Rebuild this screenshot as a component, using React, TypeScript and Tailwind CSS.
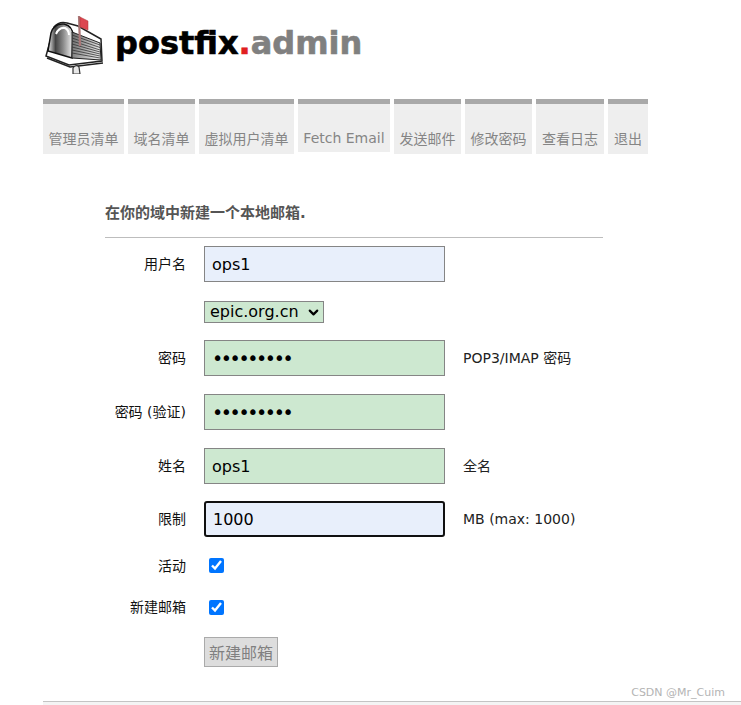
import { ChevronDown } from "lucide-react";

const TABS = [
  { label: "管理员清单", width: "w-[81px]" },
  { label: "域名清单", width: "w-[67px]" },
  { label: "虚拟用户清单", width: "w-[95px]" },
  { label: "Fetch Email", width: "w-[92px]", short: true },
  { label: "发送邮件", width: "w-[67px]" },
  { label: "修改密码", width: "w-[67px]" },
  { label: "查看日志", width: "w-[68px]" },
  { label: "退出", width: "w-[40px]" },
];

const Logo = () => (
  <svg width="60" height="62" viewBox="0 0 60 62" className="shrink-0">
    <defs>
      <linearGradient id="door" x1="0" y1="0" x2="1" y2="0">
        <stop offset="0" stopColor="#f0f0f0" />
        <stop offset="0.3" stopColor="#444" />
        <stop offset="0.6" stopColor="#888" />
        <stop offset="1" stopColor="#f2f2f2" />
      </linearGradient>
      <linearGradient id="side" x1="0" y1="0" x2="1" y2="0.3">
        <stop offset="0" stopColor="#666" />
        <stop offset="1" stopColor="#e0e0e0" />
      </linearGradient>
    </defs>
    <path d="M9 15 Q14 9 22 11 L33 14 L56 27 L57 49 L24 53 L1 44 Z" fill="#fff" stroke="#222" strokeWidth="1.5" />
    <path d="M6 21 Q9 11 19 12 Q28 14 28 24 L27 46 L3 39 Z" fill="url(#door)" stroke="#111" strokeWidth="1.5" />
    <path d="M11 22 Q14 15 20 16 Q24 18 24 23" fill="none" stroke="#fff" strokeWidth="2" />
    <path d="M27 20 L55 31 L56 48 L27 46 Z" fill="url(#side)" stroke="#222" strokeWidth="1" />
    <path
      d="M27 23 L55 33 M27 26 L55 35.5 M27 29 L55 38 M27 32 L55 40 M27 35 L55 42 M27 38 L55 44 M27 41 L55 46"
      stroke="#333"
      strokeWidth="0.8"
    />
    <path d="M34 4 L35 34" stroke="#a77" strokeWidth="2.2" />
    <path d="M35 5 L43 9 L43 18 L35 15 Z" fill="#dc4650" stroke="#a33" strokeWidth="0.5" />
    <path d="M2 46 L25 55 L58 51" fill="none" stroke="#222" strokeWidth="1.5" />
    <path d="M28 62 L28 56 Q31 52 34 55 L35 62 Z" fill="#e8e8e8" stroke="#333" strokeWidth="1.2" />
  </svg>
);

const Row = ({
  label,
  hint,
  children,
  className,
}: {
  label?: string;
  hint?: string;
  children: React.ReactNode;
  className: string;
}) => (
  <div className={`flex items-center ${className}`}>
    <label className="w-[81px] shrink-0 pt-[1px] text-right text-[14px] text-[#111]">{label}</label>
    <div className="ml-[18px] w-[241px] shrink-0">{children}</div>
    {hint && <span className="ml-[18px] text-[14px] text-[#222]">{hint}</span>}
  </div>
);

const TextField = ({
  type = "text",
  value,
  tone,
}: {
  type?: string;
  value: string;
  tone: "blue" | "green" | "focus";
}) => (
  <input
    type={type}
    readOnly
    value={value}
    className={`block h-[36px] w-full text-black outline-none ${type === "password" ? "text-[19px] tracking-[-2.4px]" : "text-[16px]"} ${
      tone === "green"
        ? "border border-[#858585] bg-[#cde8d0] pl-[7px]"
        : tone === "blue"
          ? "border border-[#858585] bg-[#e8effb] pl-[7px]"
          : "rounded-[3px] border-2 border-[#101010] bg-[#e8effb] pl-[7px]"
    }`}
  />
);

export default function App() {
  return (
    <div className="h-[705px] overflow-hidden bg-white font-['DejaVu_Sans','Noto_Sans_CJK_SC',sans-serif]">
      <div className="relative pl-[43px]">
        <div className="flex h-[99px] items-start pt-[12px] pl-[2px]">
          <Logo />
          <h1 className="ml-[10px] mt-[9px] text-[32px] leading-[44px] font-bold text-black [-webkit-text-stroke:0.6px]">
            postfix<span className="text-[#e02020]">.</span>
            <span className="text-[#808080]">admin</span>
          </h1>
        </div>

        <nav className="flex items-start gap-1">
          {TABS.map((tab) => (
            <a
              key={tab.label}
              className={`${tab.width} ${tab.short ? "h-[53px] pt-[25px]" : "h-[55px] pt-[26px]"} border-t-[5px] border-[#a9a9a9] bg-[#eeeeee] text-center text-[14px] leading-[18px] whitespace-nowrap text-[#858585]`}
            >
              {tab.label}
            </a>
          ))}
        </nav>

        <form className="ml-[62px] w-[498px] pt-[50px]">
          <h3 className="h-[34px] border-b border-[#bdbdbd] text-[15px] leading-[18px] font-bold text-[#555555]">
            在你的域中新建一个本地邮箱.
          </h3>
          <div className="pt-[8px]">
            <Row label="用户名" className="mb-[19px]">
              <TextField value="ops1" tone="blue" />
            </Row>
            <Row className="mb-[17px]">
              <div className="relative w-[120px]">
                <select className="block h-[22px] w-full appearance-none border border-[#858585] bg-[#cde8d0] pl-[5px] text-[16px] leading-[18px] text-black">
                  <option>epic.org.cn</option>
                </select>
                <ChevronDown
                  size={15}
                  strokeWidth={3.5}
                  className="pointer-events-none absolute top-[4px] right-[3px] text-black"
                />
              </div>
            </Row>
            <Row label="密码" hint="POP3/IMAP 密码" className="mb-[18px]">
              <TextField type="password" value="ops123456" tone="green" />
            </Row>
            <Row label="密码 (验证)" className="mb-[18px]">
              <TextField type="password" value="ops123456" tone="green" />
            </Row>
            <Row label="姓名" hint="全名" className="mb-[17px]">
              <TextField value="ops1" tone="green" />
            </Row>
            <Row label="限制" hint="MB (max: 1000)" className="mb-[19px]">
              <TextField value="1000" tone="focus" />
            </Row>
            <Row label="活动" className="mb-[21px] h-[20px]">
              <input type="checkbox" defaultChecked className="ml-[5px] -mt-[1px] block size-[15px] accent-[#0075ff]" />
            </Row>
            <Row label="新建邮箱" className="mb-[20px] h-[20px]">
              <input type="checkbox" defaultChecked className="ml-[5px] block size-[15px] accent-[#0075ff]" />
            </Row>
            <Row>
              <button
                type="button"
                className="block h-[30px] w-[74px] border border-[#aaaaaa] bg-[#dddddd] pt-[3px] text-center text-[16px] text-[#808080]"
              >
                新建邮箱
              </button>
            </Row>
          </div>
        </form>

        <div className="mt-[34px] h-[4px] border-t border-[#c4c4c4] bg-[#f4f4f4]" />
        <span className="absolute top-[685px] right-[16px] text-[11px] text-[#b4b4b4]">CSDN @Mr_Cuim</span>
      </div>
    </div>
  );
}
